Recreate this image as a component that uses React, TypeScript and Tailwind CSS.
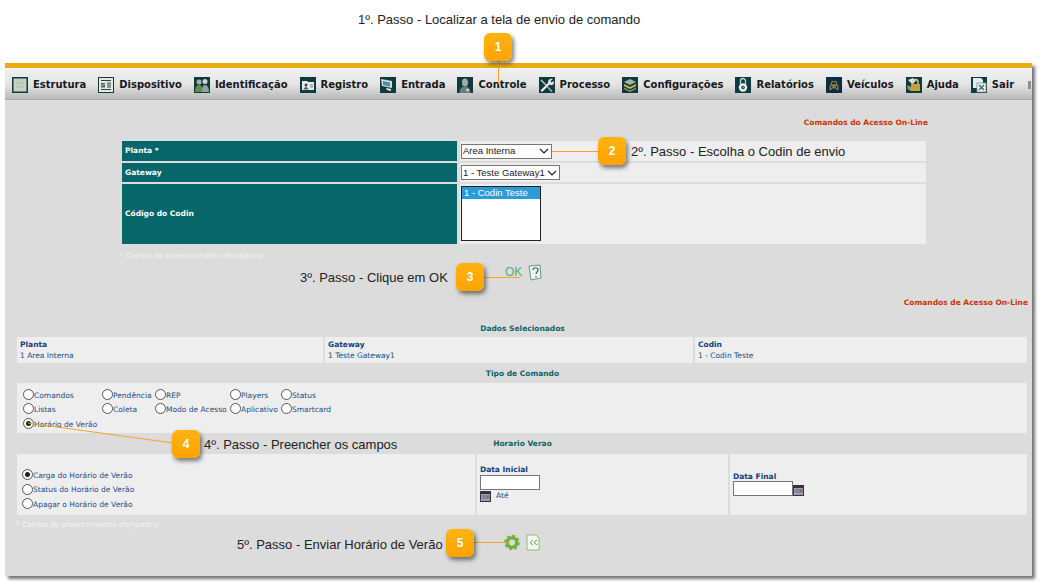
import type { ReactNode } from "react";

const sans = "font-['Liberation_Sans',Arial,sans-serif]";

function IconBox({ children, bg = "#0f3b3f" }: { children: ReactNode; bg?: string }) {
  return (
    <svg width="16" height="16" viewBox="0 0 16 16" className="shrink-0">
      <rect width="16" height="16" fill={bg} />
      {children}
    </svg>
  );
}

const navItems: { label: string; icon: ReactNode }[] = [
  {
    label: "Estrutura",
    icon: (
      <IconBox>
        <rect x="1.500" y="1.500" width="13" height="13" fill="#c3d0c2" />
        <path d="M4 6h8M4 10h8" stroke="#aebfae" strokeWidth="1" />
      </IconBox>
    ),
  },
  {
    label: "Dispositivo",
    icon: (
      <IconBox>
        <rect x="1" y="1" width="14" height="14" fill="#e3e9df" />
        <path d="M3 3.500h10M3 12.500h10M9 6h4M9 8h4M9 10h4" stroke="#2a4444" strokeWidth="1" />
        <path d="M3 6h4v1.500H4.500V8H7v2.500H3V9h2.500v-.5H3z" fill="#4c6664" />
      </IconBox>
    ),
  },
  {
    label: "Identificação",
    icon: (
      <IconBox>
        <circle cx="5" cy="5" r="2.500" fill="#9fb2b0" />
        <circle cx="11" cy="4.500" r="2.500" fill="#c9d4d2" />
        <path d="M1 15c0-5 2-7 4-7s4 2 4 7z" fill="#6b8a4e" />
        <path d="M8 15c0-5 1-7 3-7s4 2 4 7z" fill="#8fa49c" />
      </IconBox>
    ),
  },
  {
    label: "Registro",
    icon: (
      <IconBox>
        <path d="M2 4h5l1 1h6v8H2z" fill="#e4ebe8" />
        <circle cx="6" cy="8" r="1.500" fill="#345" />
        <path d="M4 12c0-2 4-2 4 0zM10 8h3M10 10h3" fill="#345" stroke="#567" strokeWidth="0.800" />
      </IconBox>
    ),
  },
  {
    label: "Entrada",
    icon: (
      <IconBox>
        <path d="M1 2l11 2v7L2 9z" fill="#cfdede" />
        <path d="M3 4l7 1.500v4L3 8z" fill="#4f8f9c" />
        <path d="M6 11l5 1v2l-4-1z" fill="#e6eeee" />
      </IconBox>
    ),
  },
  {
    label: "Controle",
    icon: (
      <IconBox bg="#123a3c">
        <ellipse cx="8" cy="5.500" rx="3" ry="4" fill="#9db0ac" />
        <path d="M2.500 16c0-5 2.500-6.500 5.500-6.500s5.500 1.500 5.500 6.500z" fill="#66807e" />
        <circle cx="10.500" cy="13" r="1.300" fill="#dfe8e6" />
      </IconBox>
    ),
  },
  {
    label: "Processo",
    icon: (
      <IconBox>
        <path d="M1.500 13.500L9.500 5.500l1.500 1.500-8 8z" fill="#eef2f2" />
        <path d="M9 6c-.5-3 2-5 5-4l-2.500 2 1 1.500L15 4c.5 3-2 5.500-4.500 3.500z" fill="#dfe6e6" />
        <path d="M2.500 2.500l5 5-1 1-5-5z" fill="#c2cfcf" />
        <path d="M9 9.500l4.500 4.500-1 1L8 10.500z" fill="#aebfbf" />
      </IconBox>
    ),
  },
  {
    label: "Configurações",
    icon: (
      <IconBox>
        <path d="M8 2l6 3-6 3-6-3z" fill="#9fb5a8" />
        <path d="M2 7l6 3 6-3v2l-6 3-6-3z" fill="#d8b84a" />
        <path d="M2 10.500l6 3 6-3v1.500l-6 3-6-3z" fill="#8a9f58" />
      </IconBox>
    ),
  },
  {
    label: "Relatórios",
    icon: (
      <IconBox>
        <path d="M5.500 7V4a2.500 2.500 0 0 1 5 0v3" fill="none" stroke="#c7d2d2" strokeWidth="1.300" />
        <circle cx="8" cy="10.500" r="4.200" fill="#e8eeee" />
        <circle cx="8" cy="10.500" r="1.800" fill="#1c3c40" />
        <circle cx="8" cy="10.500" r="0.700" fill="#c7d2d2" />
      </IconBox>
    ),
  },
  {
    label: "Veículos",
    icon: (
      <IconBox bg="#0e2c44">
        <path d="M4.500 8l1-4h5l1 4 1 1v4h-2v-1.500h-5V13h-2V9z" fill="#8f8038" />
        <rect x="6" y="5" width="4" height="2.500" fill="#1c3a50" />
        <circle cx="5.500" cy="10" r="0.900" fill="#0e2c44" />
        <circle cx="10.500" cy="10" r="0.900" fill="#0e2c44" />
      </IconBox>
    ),
  },
  {
    label: "Ajuda",
    icon: (
      <IconBox>
        <path d="M2 3l5-2 3 3-4 3z" fill="#dfe4d0" />
        <rect x="5" y="7" width="9" height="7" fill="#c2a23a" />
        <path d="M7 7V5a2.500 2.500 0 0 1 5 0v2" fill="none" stroke="#d8d4a8" strokeWidth="1.300" />
        <path d="M1.500 8l3.500 2v4l-3.500-2z" fill="#8f9f70" />
      </IconBox>
    ),
  },
  {
    label: "Sair",
    icon: (
      <IconBox>
        <path d="M2 1h8l2 2v8H2z" fill="#e6ecec" />
        <rect x="6" y="6" width="9" height="9" fill="#f1f4f4" stroke="#7b9096" strokeWidth="0.800" />
        <path d="M8 8l5 5M13 8l-5 5" stroke="#4a6a70" strokeWidth="1.500" />
      </IconBox>
    ),
  },
];

function Radio({ on = false }: { on?: boolean }) {
  return (
    <span className="w-[11px] h-[11px] shrink-0 rounded-full border border-[#555] bg-white flex items-center justify-center">
      {on && <span className="w-[5px] h-[5px] rounded-full bg-[#222]" />}
    </span>
  );
}

function RadioLabel({ label, on }: { label: string; on?: boolean }) {
  return (
    <div className="flex items-center text-[7.5px] leading-none text-[#1c4c86] whitespace-nowrap">
      <Radio on={on} />
      <span className="mt-[2px]">{label}</span>
    </div>
  );
}

function Calendar() {
  return (
    <svg width="11" height="11" viewBox="0 0 11 11" className="shrink-0">
      <rect width="11" height="11" fill="#33333d" />
      <rect x="1" y="3" width="9" height="7" fill="#b8b8d0" />
      <path d="M3 3v7M5 3v7M7 3v7M9 3v7M1 5h9M1 7h9" stroke="#44445a" strokeWidth="0.500" />
      <rect x="7" y="5" width="1.500" height="1.500" fill="#e03020" />
    </svg>
  );
}

function FakeSelect({ label, width }: { label: string; width: string }) {
  return (
    <div className={`h-[15px] pl-[1px] pr-[2px] flex items-center justify-between bg-white border border-[#777] text-[9.5px] font-normal text-[#222] whitespace-nowrap ${sans} ${width}`}>
      <span>{label}</span>
      <svg width="10" height="6" viewBox="0 0 10 6" className="shrink-0">
        <path d="M1 1l4 4 4-4" fill="none" stroke="#222" strokeWidth="1.200" />
      </svg>
    </div>
  );
}

function Callout({ n, box }: { n: number; box: string }) {
  return (
    <div
      className={`absolute w-[28px] h-[28px] rounded-[6px] bg-gradient-to-b from-[#ffb30f] to-[#ffa200] text-white font-bold text-[12px] flex items-center justify-center shadow-[2px_3px_4px_rgba(0,0,0,0.5)] ${sans} ${box}`}
    >
      {n}
    </div>
  );
}

function StepText({ children, pos }: { children: ReactNode; pos: string }) {
  return <div className={`absolute text-[13px] leading-none text-[#222] whitespace-nowrap ${sans} ${pos}`}>{children}</div>;
}

function SectionTitle({ children, className }: { children: ReactNode; className: string }) {
  return <div className={`pl-[8px] text-center leading-none font-bold text-[#06666a] ${className}`}>{children}</div>;
}

export default function App() {
  return (
    <div className="relative w-[1044px] h-[585px] overflow-hidden bg-white font-['DejaVu_Sans',Verdana,sans-serif]">
      <div className={`h-[63px] pt-[12px] pl-[358px] text-[13px] leading-[16px] text-[#222] ${sans}`}>
        1º. Passo - Localizar a tela de envio de comando
      </div>

      {/* Window */}
      <div className="ml-[5px] w-[1027px] h-[513px] flex flex-col bg-[#dcdcdc] shadow-[3px_3px_3px_rgba(0,0,0,0.55)]">
        <div className="h-[5px] bg-[#e9ad12]" />
        <div className="h-[2px] bg-[#f4f4f4]" />
        <div className="h-[30px] pl-[7px] pt-[1px] flex items-center gap-[12px] border-b border-[#aaaaaa] bg-gradient-to-b from-[#efefef] via-[#e4e4e4] to-[#b9b9b9] overflow-hidden">
          {navItems.map((item) => (
            <div key={item.label} className="flex items-center gap-[5px]">
              {item.icon}
              <span className="text-[10px] leading-none font-bold text-[#16181a] whitespace-nowrap">{item.label}</span>
            </div>
          ))}
          <div className="w-[3px] h-[8px] ml-[2px] bg-[#8d8d8d]" />
        </div>

        <div className="flex-1 flex flex-col text-[7.5px] leading-none">
          <div className="mt-[19px] h-[8px] pr-[104px] text-right font-bold text-[#cc3300]">Comandos do Acesso On-Line</div>

          {/* Search form */}
          <div className="mt-[14px] ml-[117px] w-[804px] grid grid-cols-[335px_466px] grid-rows-[20px_19px_60px] gap-x-[3px] gap-y-[2px] text-white font-bold">
            <div className="bg-[#06666a] flex items-center pl-[3px]">Planta *</div>
            <div className="bg-[#eeeeee] flex items-center pl-[1px]">
              <FakeSelect label="Area Interna" width="w-[91px]" />
            </div>
            <div className="bg-[#06666a] flex items-center pl-[3px]">Gateway</div>
            <div className="bg-[#eeeeee] flex items-center pl-[1px]">
              <FakeSelect label="1 - Teste Gateway1" width="w-[99px]" />
            </div>
            <div className="bg-[#06666a] flex items-center pl-[3px]">Código do Codin</div>
            <div className="bg-[#eeeeee] pl-[1px] pt-[2px]">
              <div className={`w-[80px] h-[55px] bg-white border border-[#222] text-[9.5px] font-normal ${sans}`}>
                <div className="h-[12px] pl-[2px] bg-[#2b9cd8] text-white leading-[12px]">1 - Codin Teste</div>
              </div>
            </div>
          </div>

          <div className="mt-[8px] ml-[115px] text-[7.3px] h-[8px] text-[#f4f4f4]">* Campo de preenchimento obrigatório</div>

          <div className="mt-[3px] ml-[500px] h-[18px] flex items-center gap-[6px]">
            <span className={`text-[12px] text-[#4fb36a] leading-none ${sans}`}>OK</span>
            <svg width="14" height="17" viewBox="0 0 14 17">
              <path d="M1 2l11-1 1 13-10 2z" fill="#eef5ee" stroke="#5d9a8a" strokeWidth="1" />
              <path d="M5 6c0-3 5-3 5 0 0 2-2 2-2 4M8 12v1.500" fill="none" stroke="#2f6a62" strokeWidth="1.200" />
            </svg>
          </div>

          <div className="mt-[18px] h-[8px] pr-[4px] text-right font-bold text-[#cc3300]">Comandos de Acesso On-Line</div>

          <SectionTitle className="mt-[18px] h-[8px]">Dados Selecionados</SectionTitle>

          <div className="mt-[4px] ml-[12px] w-[1010px] h-[26px] grid grid-cols-[306px_368px_1fr] gap-x-[2px] text-[#1c4c86]">
            <div className="bg-[#eeeeee] pl-[3px] pt-[4px]">
              <div className="font-bold text-[#0f3f7c]">Planta</div>
              <div className="mt-[3px]">1 Area Interna</div>
            </div>
            <div className="bg-[#eeeeee] pl-[3px] pt-[4px]">
              <div className="font-bold text-[#0f3f7c]">Gateway</div>
              <div className="mt-[3px]">1 Teste Gateway1</div>
            </div>
            <div className="bg-[#eeeeee] pl-[3px] pt-[4px]">
              <div className="font-bold text-[#0f3f7c]">Codin</div>
              <div className="mt-[3px]">1 - Codin Teste</div>
            </div>
          </div>

          <SectionTitle className="mt-[7px] h-[8px]">Tipo de Comando</SectionTitle>

          <div className="mt-[5px] ml-[12px] w-[1010px] h-[50px] pl-[6px] pt-[4px] bg-[#eeeeee] grid grid-cols-[79px_53px_75px_51px_1fr] auto-rows-[14.500px] items-center">
            <RadioLabel label="Comandos" />
            <RadioLabel label="Pendência" />
            <RadioLabel label="REP" />
            <RadioLabel label="Players" />
            <RadioLabel label="Status" />
            <RadioLabel label="Listas" />
            <RadioLabel label="Coleta" />
            <RadioLabel label="Modo de Acesso" />
            <RadioLabel label="Aplicativo" />
            <RadioLabel label="Smartcard" />
            <RadioLabel label="Horário de Verão" on />
          </div>

          <SectionTitle className="mt-[7px] h-[8px]">Horario Verao</SectionTitle>

          <div className="mt-[6px] ml-[12px] w-[1010px] h-[61px] grid grid-cols-[458px_251px_1fr] gap-x-[2px]">
            <div className="bg-[#eeeeee] pl-[5px] pt-[15px] flex flex-col gap-[3.500px]">
              <RadioLabel label="Carga do Horário de Verão" on />
              <RadioLabel label="Status do Horário de Verão" />
              <RadioLabel label="Apagar o Horário de Verão" />
            </div>
            <div className="bg-[#eeeeee] pl-[3px] pt-[12px]">
              <div className="font-bold text-[#0f3f7c]">Data Inicial</div>
              <input className="block mt-[1px] w-[60px] h-[15px] bg-white border border-[#777]" />
              <div className="mt-[1px] flex items-center gap-[5px] text-[#1c4c86]">
                <Calendar />
                <span>Até</span>
              </div>
            </div>
            <div className="bg-[#eeeeee] pl-[3px] pt-[19px]">
              <div className="font-bold text-[#0f3f7c]">Data Final</div>
              <div className="flex items-end">
                <input className="block w-[60px] h-[15px] bg-white border border-[#777]" />
                <Calendar />
              </div>
            </div>
          </div>

          <div className="mt-[6px] ml-[11px] text-[7.3px] h-[8px] text-[#f4f4f4]">* Campo de preenchimento obrigatório</div>

          <div className="mt-[5px] ml-[499px] flex items-center gap-[6px]">
            <svg width="16" height="17" viewBox="0 0 17 17">
              <circle cx="8.500" cy="8.500" r="5" fill="none" stroke="#6cb33f" strokeWidth="3.500" />
              <circle cx="8.500" cy="8.500" r="7" fill="none" stroke="#6cb33f" strokeWidth="2.500" strokeDasharray="3 2.500" />
            </svg>
            <svg width="14" height="17" viewBox="0 0 14 17">
              <path d="M1 1h9l3 3v12H1z" fill="#f2f9ee" stroke="#8cc06a" strokeWidth="1" />
              <path d="M7 6L4 8.500 7 11M11 6L8 8.500 11 11" fill="none" stroke="#4fa65a" strokeWidth="1" />
            </svg>
          </div>
        </div>
      </div>

      {/* Annotations */}
      <div className="absolute left-[498px] top-[60px] w-[1px] h-[24px] bg-[#f5a623]" />
      <div className="absolute left-[552px] top-[151px] w-[47px] h-[1px] bg-[#f5a623]" />
      <div className="absolute left-[484px] top-[277px] w-[36px] h-[1px] bg-[#f5a623]" />
      <svg width="150" height="24" viewBox="0 0 150 24" className="absolute left-[27px] top-[422px]">
        <path d="M1 1L146 21" stroke="#f5a623" strokeWidth="1" />
      </svg>
      <div className="absolute left-[474px] top-[542px] w-[36px] h-[1px] bg-[#f5a623]" />

      <Callout n={1} box="left-[484px] top-[33px]" />
      <Callout n={2} box="left-[598px] top-[137px]" />
      <Callout n={3} box="left-[456px] top-[263px]" />
      <Callout n={4} box="left-[172px] top-[430px]" />
      <Callout n={5} box="left-[446px] top-[529px]" />

      <StepText pos="left-[631px] top-[145px]">2º. Passo - Escolha o Codin de envio</StepText>
      <StepText pos="left-[300px] top-[271px]">3º. Passo - Clique em OK</StepText>
      <StepText pos="left-[204px] top-[438px]">4º. Passo - Preencher os campos</StepText>
      <StepText pos="left-[237px] top-[538px]">5º. Passo - Enviar Horário de Verão</StepText>
    </div>
  );
}
